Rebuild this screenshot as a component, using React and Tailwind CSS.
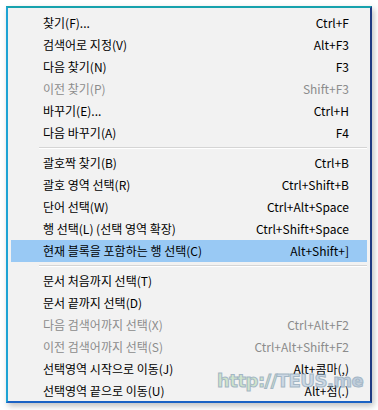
import React from "react";

const groups = [
  [
    { label: "찾기(F)...", key: "Ctrl+F" },
    { label: "검색어로 지정(V)", key: "Alt+F3" },
    { label: "다음 찾기(N)", key: "F3" },
    { label: "이전 찾기(P)", key: "Shift+F3", disabled: true },
    { label: "바꾸기(E)...", key: "Ctrl+H" },
    { label: "다음 바꾸기(A)", key: "F4" },
  ],
  [
    { label: "괄호짝 찾기(B)", key: "Ctrl+B" },
    { label: "괄호 영역 선택(R)", key: "Ctrl+Shift+B" },
    { label: "단어 선택(W)", key: "Ctrl+Alt+Space" },
    { label: "행 선택(L) (선택 영역 확장)", key: "Ctrl+Shift+Space" },
    { label: "현재 블록을 포함하는 행 선택(C)", key: "Alt+Shift+]", active: true },
  ],
  [
    { label: "문서 처음까지 선택(T)", key: "" },
    { label: "문서 끝까지 선택(D)", key: "" },
    { label: "다음 검색어까지 선택(X)", key: "Ctrl+Alt+F2", disabled: true },
    { label: "이전 검색어까지 선택(S)", key: "Ctrl+Alt+Shift+F2", disabled: true },
    { label: "선택영역 시작으로 이동(J)", key: "Alt+콤마(,)" },
    { label: "선택영역 끝으로 이동(U)", key: "Alt+점(.)" },
  ],
];

function Item({ item }) {
  return (
    <div
      className={
        "mx-[3px] h-[22px] flex items-center justify-between pl-[32px] pr-[18px] " +
        (item.active ? "bg-[#99c9f4] " : "") +
        (item.disabled ? "text-[#8c8c8c]" : "text-black")
      }
    >
      <span>{item.label}</span>
      <span>{item.key}</span>
    </div>
  );
}

export default function App() {
  return (
    <div className="w-[378px] h-[410px] bg-white pt-[6px] pl-[6px]">
      <div
        className="relative w-[366px] h-[397px] bg-[#f2f2f2] border-2 border-t-[#17a2ad] border-l-[#1ea3d4] border-r-[#1f3b84] border-b-[#1b62c4] shadow-[2px_3px_6px_rgba(0,0,0,0.25)] pt-[4px] text-[12px] leading-none"
        style={{ fontFamily: '"Noto Sans CJK KR", "Noto Sans", sans-serif' }}
      >
        {groups.map((g, gi) => (
          <div key={gi}>
            {gi > 0 && <div className="ml-[31px] mr-[3px] my-[3px] h-px bg-[#d5d5d5] border-b border-white box-content" />}
            {g.map((item, i) => (
              <Item key={i} item={item} />
            ))}
          </div>
        ))}
        <div
          className="absolute left-[209px] top-[364px] text-[18px] font-bold leading-none tracking-[-0.5px] opacity-60 pointer-events-none [-webkit-text-stroke:1px_#6f8fa8]"
          style={{ fontFamily: '"DejaVu Sans", sans-serif' }}
        >
          <span className="text-[#b8dcb0]">http://</span>
          <span className="text-[#b4c8dc]">TEUS</span>
          <span className="text-[#9fb6d0]">.me</span>
        </div>
      </div>
    </div>
  );
}
